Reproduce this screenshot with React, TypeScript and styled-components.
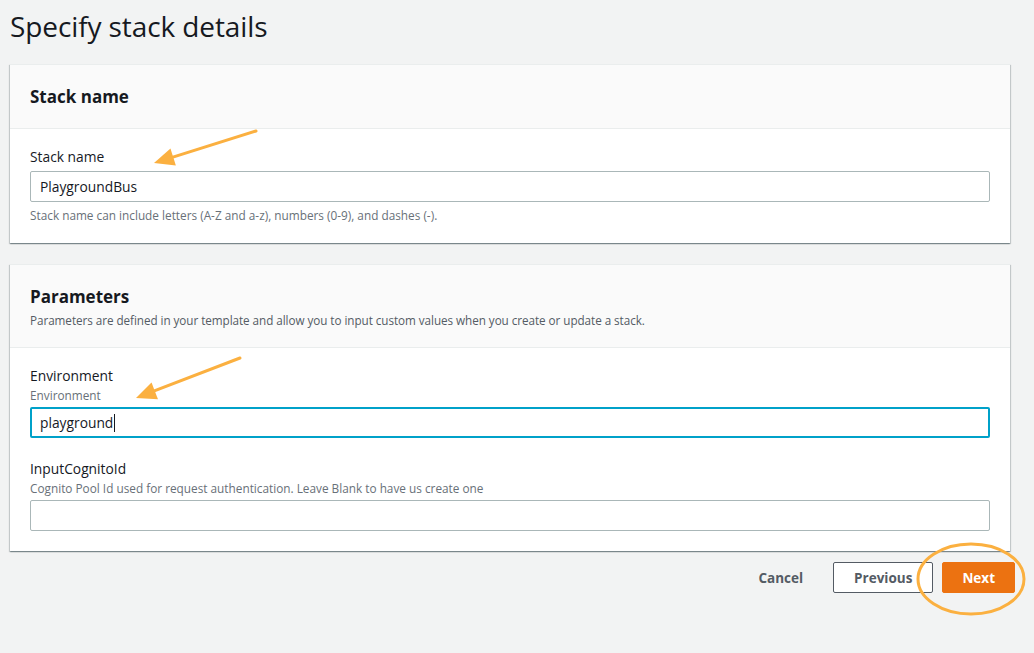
import { FunctionComponent } from 'react';
import styled, { createGlobalStyle } from 'styled-components';

const GlobalStyle = createGlobalStyle`
  html, body {
    margin: 0;
    padding: 0;
    background-color: #f2f3f3;
    font-family: 'Open Sans', 'Noto Sans', sans-serif;
    color: #16191f;
  }
`;

const Page = styled.main`
  position: relative;
  width: 1034px;
  height: 653px;
  box-sizing: border-box;
  padding: 8px 19px 0 10px;
  overflow: hidden;
`;

const Title = styled.h1`
  margin: 0;
  font-size: 28px;
  line-height: 36px;
  font-weight: 400;
  letter-spacing: -0.1px;
`;

const Card = styled.section<{ $top: number }>`
  margin: ${({ $top }) => $top}px 5px 0 0;
  background: #fff;
  border-top: 1px solid #eaeded;
  box-shadow: 0 1px 1px 0 rgba(0, 28, 36, 0.3), 1px 1px 1px 0 rgba(0, 28, 36, 0.15),
    -1px 1px 1px 0 rgba(0, 28, 36, 0.15);
`;

const CardHeader = styled.header`
  background: #fafafa;
  border-bottom: 1px solid #eaeded;
  padding: 20px 20px 19px;
`;

const CardTitle = styled.h2`
  margin: 0;
  font-size: 17px;
  line-height: 24px;
  font-weight: 700;
`;

const CardDesc = styled.p`
  margin: 3px 0 0;
  font-size: 11.7px;
  line-height: 16px;
  color: #545b64;
  letter-spacing: -0.05px;
`;

const CardBody = styled.div`
  padding: 18px 20px 20px;
  display: flex;
  flex-direction: column;
  gap: 21px;
`;

const Field = styled.div`
  display: flex;
  flex-direction: column;
`;

const Label = styled.label`
  font-size: 13.8px;
  line-height: 20px;
  color: #16191f;
`;

const SubLabel = styled.span`
  margin-top: 1px;
  font-size: 11.8px;
  line-height: 16px;
  color: #687078;
`;

const Input = styled.div<{ $focused?: boolean }>`
  box-sizing: border-box;
  height: 31px;
  margin-top: 4px;
  border: ${({ $focused }) => ($focused ? '2px solid #00a1c9' : '1px solid #aab7b8')};
  border-radius: 2px;
  padding: 0 ${({ $focused }) => ($focused ? '8px' : '9px')};
  display: flex;
  align-items: center;
  font-size: 13.8px;
  color: #16191f;
  background: #fff;
`;

const Caret = styled.span`
  display: inline-block;
  width: 1px;
  height: 18px;
  background: #16191f;
  margin-left: 1px;
`;

const Help = styled.span`
  margin-top: 5px;
  font-size: 11.8px;
  line-height: 16px;
  color: #687078;
`;

const Actions = styled.div`
  display: flex;
  justify-content: flex-end;
  align-items: center;
  gap: 9px;
  margin-top: 11px;
`;

const Button = styled.button<{ $variant: 'link' | 'normal' | 'primary' }>`
  box-sizing: border-box;
  height: 31px;
  padding: 0 ${({ $variant }) => ($variant === 'primary' ? '19px' : '20px')};
  border-radius: 2px;
  font-family: inherit;
  font-size: 13.5px;
  font-weight: 700;
  cursor: pointer;
  color: ${({ $variant }) => ($variant === 'primary' ? '#fff' : '#545b64')};
  background: ${({ $variant }) =>
    $variant === 'primary' ? '#ec7211' : $variant === 'normal' ? '#fff' : 'transparent'};
  border: 1px solid
    ${({ $variant }) =>
      $variant === 'primary' ? '#ec7211' : $variant === 'normal' ? '#545b64' : 'transparent'};
`;

const Annotations = styled.svg`
  position: absolute;
  inset: 0;
  pointer-events: none;
`;

const Arrow: FunctionComponent<{ x1: number; y1: number; x2: number; y2: number }> = ({
  x1,
  y1,
  x2,
  y2,
}) => {
  const angle = Math.atan2(y2 - y1, x2 - x1);
  const len = 22;
  const spread = 0.42;
  const a = [x2 - len * Math.cos(angle - spread), y2 - len * Math.sin(angle - spread)];
  const b = [x2 - len * Math.cos(angle + spread), y2 - len * Math.sin(angle + spread)];
  const sx = x2 - 14 * Math.cos(angle);
  const sy = y2 - 14 * Math.sin(angle);
  return (
    <g>
      <line x1={x1} y1={y1} x2={sx} y2={sy} stroke="#fbb040" strokeWidth={3} strokeLinecap="round" />
      <polygon points={`${x2},${y2} ${a[0]},${a[1]} ${b[0]},${b[1]}`} fill="#fbb040" />
    </g>
  );
};

const App: FunctionComponent = (): JSX.Element => {
  return (
    <>
      <GlobalStyle />
      <Page>
        <Title>Specify stack details</Title>

        <Card $top={20}>
          <CardHeader>
            <CardTitle>Stack name</CardTitle>
          </CardHeader>
          <CardBody>
            <Field>
              <Label>Stack name</Label>
              <Input>PlaygroundBus</Input>
              <Help>Stack name can include letters (A-Z and a-z), numbers (0-9), and dashes (-).</Help>
            </Field>
          </CardBody>
        </Card>

        <Card $top={21}>
          <CardHeader>
            <CardTitle>Parameters</CardTitle>
            <CardDesc>
              Parameters are defined in your template and allow you to input custom values when you
              create or update a stack.
            </CardDesc>
          </CardHeader>
          <CardBody>
            <Field>
              <Label>Environment</Label>
              <SubLabel>Environment</SubLabel>
              <Input $focused>
                playground
                <Caret />
              </Input>
            </Field>
            <Field>
              <Label>InputCognitoId</Label>
              <SubLabel>Cognito Pool Id used for request authentication. Leave Blank to have us create one</SubLabel>
              <Input />
            </Field>
          </CardBody>
        </Card>

        <Actions>
          <Button $variant="link">Cancel</Button>
          <Button $variant="normal">Previous</Button>
          <Button $variant="primary">Next</Button>
        </Actions>

        <Annotations width="1034" height="653" viewBox="0 0 1034 653">
          <Arrow x1={256} y1={131} x2={154} y2={163} />
          <Arrow x1={240} y1={358} x2={136} y2={398} />
          <ellipse cx={971} cy={579} rx={53} ry={35} fill="none" stroke="#fbb040" strokeWidth={3} />
        </Annotations>
      </Page>
    </>
  );
};

export default App;
